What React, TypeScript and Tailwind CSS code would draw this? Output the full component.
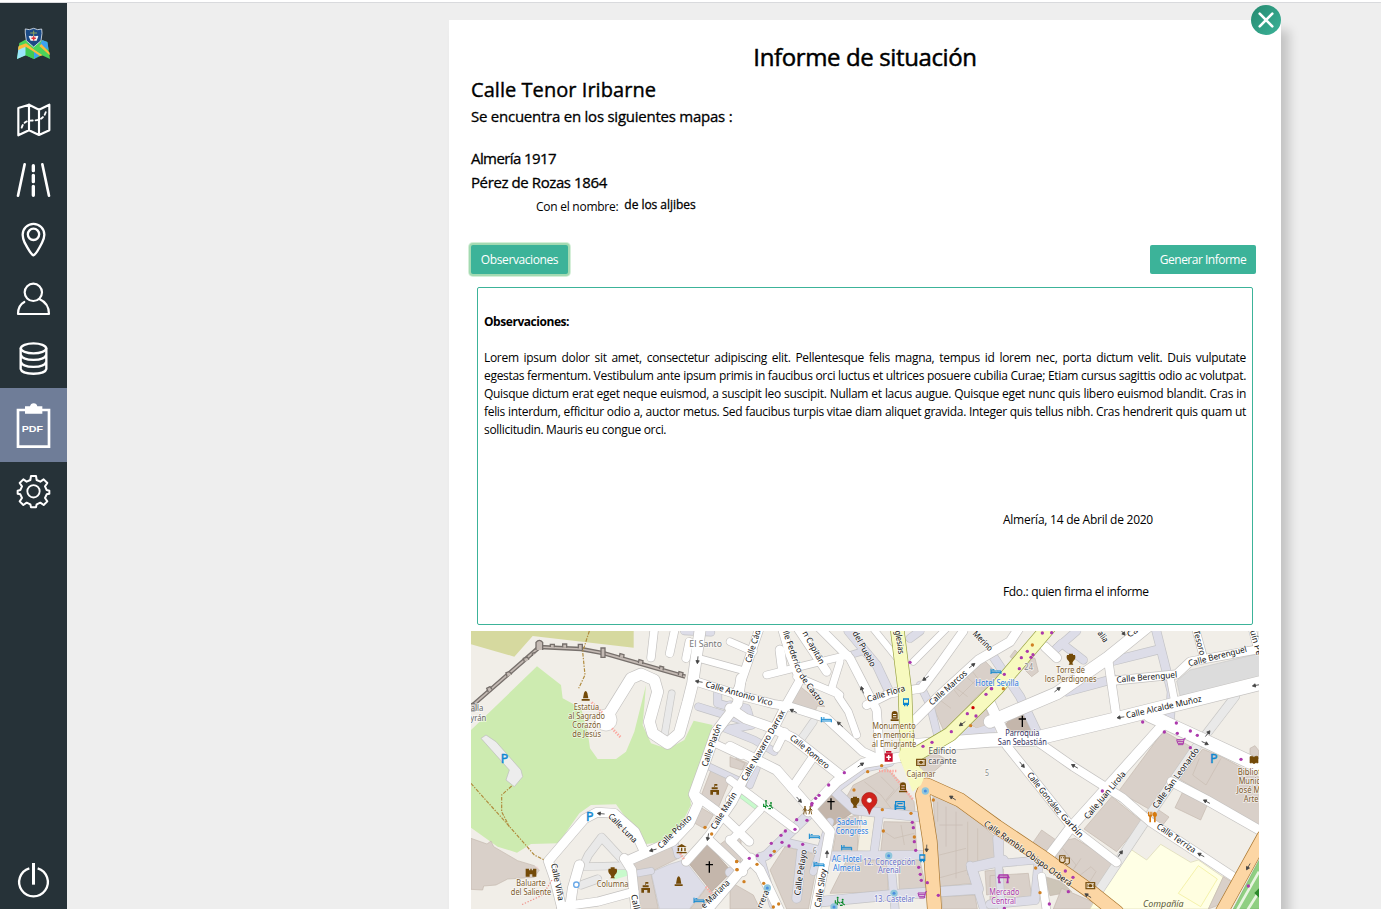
import React from 'react';

type Road = [number, number, string, string];

// The map is drawn in three side by side tiles; each entry starts with the tile's x offset.
const A = 0;
const B = 777;
const C = 1557;

const styles: Record<string, [string, string]> = {
  w: ['#ffffff', '#c4c2c0'],
  p: ['#dddde8', '#c3c3c6'],
  s: ['#e9e9e9', '#c9c8c6'],
  y: ['#f7fabf', '#98a243'],
  o: ['#fcd6a4', '#aa7730'],
};

const areas: [number, string, string, string?][] = [
  [A, '#d6d99f', '0,18 488,18 488,68 185,33 130,95 0,58'],
  [A, '#cdebb0', '198,124 270,180 275,220 330,250 350,320 357,370 380,402 435,402 465,380 490,320 525,180 515,300 540,355 590,372 640,345 668,287 725,300 690,420 655,500 660,540 640,580 600,635 580,650 520,658 495,620 435,538 360,540 325,565 262,655 180,657 138,683 80,665 0,608 0,315'],
  [A, '#ededed', '30,340 45,330 75,350 150,435 155,455 130,485 105,465 115,435', '#bbb'],
  [A, '#d9d0c9', '0,640 48,657 60,648 68,665 140,707 190,722 205,735 190,757 110,762 75,780 38,783 35,795 0,793', '#c4b8ae'],
  [A, '#f2dad9', '205,735 200,725 190,722'],
  [A, '#c8facc', '440,730 466,725 470,752 425,765'],
  [A, '#d9d0c9', '722,430 778,462 742,548 692,508', '#c4b8ae'],
  [A, '#d9d0c9', '682,543 727,570 702,612 663,590', '#c4b8ae'],
  [A, '#c4b6ab', '648,708 708,655 782,740 722,800', '#b0a196'],
  [A, '#d9d0c9', '482,706 600,665 622,700 545,738 492,735', '#c4b8ae'],
  [A, '#d9d0c9', '492,752 540,745 562,852 505,852', '#c4b8ae'],
  [A, '#dddde8', '540,742 595,718 640,704 705,787 655,852 565,852', '#c3c3c6'],
  [A, '#d9d0c9', '658,852 705,790 742,812 715,852', '#c4b8ae'],
  [A, '#d9d0c9', '745,660 810,610 810,720 790,720', '#c4b8ae'],
  [A, '#d9d0c9', '795,400 830,415 830,440 780,420', '#c4b8ae'],
  [B, '#d9d0c9', '205,180 285,245 262,243 255,260 215,250 185,240', '#c4b8ae'],
  [B, '#d9d0c9', '605,235 745,112 765,108 810,155 740,215 685,275 640,315', '#c4b8ae'],
  [B, '#d9d0c9', '740,235 770,255 785,295 740,310 700,285', '#c4b8ae'],
  [B, '#dddde8', '765,210 805,250 795,330 655,332 700,295 740,310 785,295'],
  [B, '#d9d0c9', '590,370 652,405 600,450 560,430', '#c4b8ae'],
  [B, '#d9d0c9', '370,480 470,430 510,470 552,530 555,560 455,555 385,552 350,515', '#c4b8ae'],
  [B, '#c4b6ab', '315,475 330,515 372,560 305,605 255,545', '#b0a196'],
  [B, '#d9d0c9', '462,590 555,592 560,678 452,680', '#c4b8ae'],
  [B, '#d9d0c9', '325,585 385,568 382,680 308,680', '#c4b8ae'],
  [B, '#f3efe2', '395,568 435,575 422,680 382,678', '#c4b8ae'],
  [B, '#d9d0c9', '505,706 570,706 588,790 508,800', '#c4b8ae'],
  [B, '#d9d0c9', '350,706 470,706 475,800 300,805', '#c4b8ae'],
  [B, '#d9d0c9', '608,505 700,548 810,650 810,706 722,722 725,775 628,785', '#c4b8ae'],
  [B, '#d9d0c9', '765,738 820,732 820,800 770,810', '#c4b8ae'],
  [B, '#d9d0c9', '635,815 735,810 742,852 638,852', '#c4b8ae'],
  [B, '#d9d0c9', '0,770 70,810 90,852 0,852', '#c4b8ae'],
  [B, '#d9d0c9', '120,735 165,665 265,690 255,750 235,852 170,852', '#c4b8ae'],
  [B, '#c8facc', '32,495 88,535 75,552 22,512', '#b7dcb9'],
  [B, '#d9d0c9', '0,395 45,415 35,435 0,425', '#c4b8ae'],
  [C, '#c4b6ab', '88,252 120,270 135,320 50,318 45,300', '#b0a196'],
  [C, '#d9d0c9', '75,75 90,90 135,100 145,140 125,155 95,125 60,95', '#c4b8ae'],
  [C, '#dcdcdc', '560,168 600,135 810,85 810,165 570,212', '#c8c8c8'],
  [C, '#d9d0c9', '520,318 608,368 482,555 385,500', '#c4b8ae'],
  [C, '#d9d0c9', '365,515 457,590 380,680 282,612', '#c4b8ae'],
  [C, '#d9d0c9', '638,372 700,398 810,458 810,605 568,462', '#c4b8ae'],
  [C, '#d9d0c9', '577,503 652,540 632,585 555,548', '#c4b8ae'],
  [C, '#d9d0c9', '502,552 537,576 512,608 488,590', '#c4b8ae'],
  [C, '#d9d0c9', '155,615 205,650 255,640 378,715 308,800 118,668', '#c4b8ae'],
  [C, '#d9d0c9', '0,752 115,745 125,815 0,830', '#c4b8ae'],
  [C, '#cdc5b8', '165,755 215,770 245,800 180,812', '#c4b8ae'],
  [C, '#d9d0c9', '215,790 330,840 330,852 190,852', '#c4b8ae'],
  [C, '#ffffe5', '418,670 470,705 512,658 602,712 625,705 700,757 655,852 300,852 340,780', '#d9d6b0'],
  [C, '#fffee0', '625,722 682,762 632,845 565,805', '#eeeb8e'],
  [C, '#d9d0c9', '700,755 740,780 700,835 655,852', '#c4b8ae'],
  [C, '#8fcf82', '810,700 810,852 730,852', '#77b56c'],
  [C, '#d9d0c9', '780,370 795,362 807,378 800,420 780,410', '#c4b8ae'],
];

const roads: Road[] = [
  [A, 22, 's', '602,205 578,345'],
  [A, 26, 's', '338,720 352,690 392,637 455,705'],
  [A, 24, 's', '330,725 465,722'],
  [A, 26, 's', '330,780 380,762'],
  [A, 24, 'p', '682,245 820,288'],
  [A, 26, 'p', '740,205 740,235 830,260'],
  [A, 24, 'p', '750,305 850,345 910,380'],
  [A, 22, 'p', '700,418 800,465'],
  [A, 24, 'p', '640,18 720,22'],
  [A, 22, 'p', '610,650 620,690'],
  [A, 22, 'p', '500,745 540,738'],
  [B, 28, 'p', '355,18 440,120 480,205'],
  [B, 22, 'p', '355,92 400,78'],
  [B, 26, 'p', '540,40 570,18'],
  [B, 24, 'p', '570,180 600,240 625,340'],
  [B, 26, 'p', '0,240 50,250 65,300 0,312'],
  [B, 22, 'p', '60,480 80,430'],
  [B, 30, 'p', '0,742 110,690 240,565'],
  [B, 26, 'p', '90,695 130,840'],
  [B, 26, 'p', '160,650 290,680'],
  [B, 30, 'p', '215,680 200,820'],
  [B, 30, 'p', '305,490 375,555 565,575'],
  [B, 26, 'p', '320,490 400,430 480,412'],
  [B, 26, 'p', '447,575 432,685'],
  [B, 28, 'p', '290,692 590,690'],
  [B, 24, 'p', '250,740 300,590'],
  [B, 26, 'p', '480,690 495,852'],
  [B, 32, 'p', '270,830 480,810 745,792 725,728 820,706'],
  [B, 24, 'p', '720,720 760,852'],
  [B, 24, 'p', '800,640 815,852'],
  [C, 28, 'p', '0,80 90,215 145,330'],
  [C, 26, 'p', '190,80 215,55 280,105'],
  [C, 26, 'p', '200,70 260,18'],
  [C, 28, 'p', '360,110 500,75'],
  [C, 28, 'p', '497,10 545,200 540,280'],
  [C, 28, 'p', '230,200 370,162'],
  [C, 24, 'p', '0,718 140,705'],
  [C, 26, 'p', '28,640 28,715'],
  [C, 28, 'p', '0,838 135,825 145,720'],
  [C, 28, 's', '735,215 620,365 465,590 325,800'],
  [B, 24, 's', '215,340 250,290'],
  [A, 26, 'w', '550,10 540,98'],
  [A, 26, 'w', '612,10 596,85'],
  [A, 26, 'w', '655,50 645,100'],
  [A, 36, 'w', '688,10 665,175 650,235 625,325 590,355 545,325 535,290 560,200 550,165 510,147 480,160 415,265'],
  [A, 24, 'w', '690,102 810,135'],
  [A, 28, 'w', '670,168 810,212 907,237 957,245 1067,280 1175,380 1230,405'],
  [A, 32, 'w', '810,160 800,235 735,320 705,405 668,508 682,535 655,595 605,648 480,703'],
  [A, 28, 'w', '670,508 740,560 835,650'],
  [A, 24, 'w', '725,352 810,392'],
  [A, 28, 'w', '830,440 785,530 730,610 708,640 645,710'],
  [A, 30, 'w', '708,640 815,740'],
  [A, 32, 'w', '840,700 700,865'],
  [A, 30, 'w', '520,680 492,620 430,565 378,562 340,582 232,708 250,760 275,860'],
  [A, 30, 'w', '460,700 482,735 495,860'],
  [A, 32, 'w', '295,860 305,790 325,720'],
  [A, 28, 'w', '270,845 380,830 490,800'],
  [B, 28, 'w', '90,5 30,180 15,210'],
  [B, 24, 'w', '0,50 70,80'],
  [B, 28, 'w', '155,5 180,90 210,165 165,245 140,295 55,440 0,525'],
  [B, 28, 'w', '200,5 290,140'],
  [B, 24, 'w', '110,150 250,115 355,90'],
  [B, 30, 'w', '150,75 157,130'],
  [B, 24, 'w', '200,155 330,210 305,190 330,110'],
  [B, 24, 'w', '325,215 355,260 380,330'],
  [B, 28, 'w', '265,5 360,100 440,255 450,395'],
  [B, 28, 'w', '410,240 480,205 575,190 620,130 700,18'],
  [B, 22, 'w', '425,5 510,110'],
  [B, 22, 'w', '550,110 650,10'],
  [B, 30, 'w', '550,290 625,215 745,105 840,50 870,5'],
  [B, 32, 'w', '0,250 45,280 130,310 190,340 330,450'],
  [B, 24, 'w', '165,320 140,370'],
  [B, 28, 'w', '250,395 185,490'],
  [B, 32, 'w', '0,365 140,435 245,555 300,620 280,730 255,860'],
  [B, 32, 'w', '235,560 320,470 400,415 520,395'],
  [B, 26, 'w', '0,465 195,612'],
  [B, 26, 'w', '90,555 10,640'],
  [B, 30, 'w', '0,645 90,735 150,860'],
  [C, 30, 'w', '165,65 200,98'],
  [C, 44, 'w', '-220,362 0,345 130,342 380,282 820,172'],
  [C, 40, 'w', '0,290 200,205 355,98 470,5'],
  [C, 34, 'w', '0,235 50,345'],
  [C, 28, 'w', '353,95 380,280'],
  [C, 28, 'w', '372,167 560,148 600,110 820,70'],
  [C, 24, 'w', '540,155 555,235'],
  [C, 24, 'w', '615,5 640,95'],
  [C, 24, 'w', '785,5 805,80'],
  [C, 42, 'w', '480,272 650,350 820,430'],
  [C, 32, 'w', '520,298 240,610 165,710'],
  [C, 28, 'w', '50,362 250,612 380,712'],
  [C, 28, 'w', '150,355 250,425 400,520 480,590 745,765'],
  [C, 30, 'w', '545,470 650,525 820,622'],
  [C, 26, 'w', '155,755 170,860'],
  [B, 42, 'y', '500,0 525,200 532,400 560,455'],
  [B, 44, 'y', '538,400 660,328 800,190 970,-10'],
  [B, 44, 'o', '1160,862 1080,798 930,692 800,605 690,525 590,480 578,510 600,650 614,860'],
  [C, 40, 'o', '820,635 690,870'],
];

const dash: [number, string, string][] = [
  [A, '#b08a3c', '355,18 335,80 342,150 323,190'],
  [A, '#b08a3c', '0,475 120,610 190,690 220,705'],
  [A, '#b08a3c', '122,483 92,510 92,560 115,605'],
  [A, '#f08c84', '243,765 215,810 150,840'],
];

const steps: [number, string][] = [
  [A, '362,232 395,265'],
  [A, '423,310 450,338'],
  [A, '628,685 640,704'],
  [A, '705,785 722,806'],
  [B, '480,438 550,525'],
  [B, '447,438 500,438'],
];

const dots: [number, string, string][] = [
  [B, '#ac39ac', '540,112 606,352 579,364 664,320 712,266 738,273 768,208 784,191 343,443 296,480 267,511 257,520 246,535 200,584 231,586 195,613 166,618 153,631 156,652 177,663 124,655 82,692 58,700 122,691 218,658 547,592 550,608 553,650 557,676 566,727 571,748 574,766 592,773 625,811 245,540'],
  [B, '#d08023', '722,302 455,422 413,440 372,495 457,554 543,565 610,525 553,636 460,618 81,718 20,709 21,734 42,770 101,775 133,679 146,837 130,846'],
  [A, '#d08023', '702,607 722,627 797,710 798,734'],
  [C, '#ac39ac', '157,24 185,23 112,79 94,98 129,89 123,97 88,131 43,148 5,191 458,291 559,294 523,321 562,325 601,318 622,331 601,368 753,403 337,498 226,738 249,757 235,800 178,837 775,783 43,850'],
  [C, '#d08023', '127,60 40,191 137,729 150,803'],
];

// text, tile, x1, y1, x2, y2 of its baseline
const streetNames: [string, number, number, number, number, number][] = [
  ['Calle Antonio Vico', A, 702, 185, 902, 243],
  ['Calle Platón', A, 708, 427, 752, 300],
  ['Calle Luna', A, 410, 575, 488, 655],
  ['Calle Pósito', A, 570, 672, 664, 580],
  ['Calle Marín', A, 733, 615, 798, 508],
  ['Calle Viña', A, 240, 717, 262, 828],
  ['Calle', A, 480, 810, 492, 870],
  ['e Mariana', A, 700, 852, 778, 775],
  ['Calle Cád', B, 62, 115, 92, 18],
  ['lle Federico', B, 158, 20, 202, 145],
  ['de Castro', B, 206, 153, 272, 243],
  ['n Capitán', B, 217, 24, 270, 120],
  ['del Pueblo', B, 367, 24, 423, 127],
  ['glesias', B, 495, 18, 506, 88],
  ['Merino', B, 727, 28, 778, 80],
  ['Calle Flora', B, 414, 231, 527, 197],
  ['Calle Marcos', B, 606, 242, 713, 147],
  ['Calle Navarro Darrax', B, 48, 470, 166, 262],
  ['Calle Romero', B, 178, 341, 290, 433],
  ['Calle Siloy', B, 271, 848, 290, 733],
  ['Calle Pelayo', B, 210, 812, 230, 675],
  ['rrera', B, 95, 852, 118, 800],
  ['alia', C, 322, 25, 342, 54],
  ['Ca', C, 418, 38, 446, 20],
  ['Tesoro', C, 610, 18, 630, 92],
  ['uín Pe', C, 780, 18, 800, 92],
  ['Calle Berenguel', C, 380, 173, 562, 157],
  ['Calle Berenguel', C, 597, 124, 772, 80],
  ['Calle Alcalde Muñoz', C, 410, 280, 636, 229],
  ['Calle González', C, 110, 450, 204, 570],
  ['Garbín', C, 210, 576, 270, 640],
  ['Calle Juan Lirola', C, 294, 584, 408, 448],
  ['Calle San Leonardo', C, 500, 552, 628, 376],
  ['Calle Terriza', C, 498, 608, 610, 685],
  ['Calle Rambla Obispo Orberá', C, -20, 600, 238, 785],
];

// text, tile, centre x, baseline y, width, colour
const places: [string, number, number, number, number, string][] = [
  ['El Santo', A, 704, 66, 98, '#777777'],
  ['alla', A, 18, 257, 38, '#666666'],
  ['yrán', A, 22, 287, 48, '#666666'],
  ['Estatua', A, 346, 255, 76, '#7b5a2a'],
  ['al Sagrado', A, 347, 281, 110, '#7b5a2a'],
  ['Corazón', A, 347, 308, 86, '#7b5a2a'],
  ['de Jesús', A, 347, 335, 86, '#7b5a2a'],
  ['Baluarte', A, 180, 784, 88, '#7b5a2a'],
  ['del Saliente', A, 180, 811, 121, '#7b5a2a'],
  ['Columna', A, 425, 787, 95, '#7b5a2a'],
  ['Monumento', B, 492, 313, 130, '#7b5a2a'],
  ['en memoria', B, 492, 339, 127, '#7b5a2a'],
  ['al Emigrante', B, 492, 366, 133, '#7b5a2a'],
  ['Edificio', B, 637, 388, 83, '#555555'],
  ['carante', B, 637, 417, 85, '#555555'],
  ['Cajamar', B, 573, 456, 87, '#7b5a2a'],
  ['Sadelma', B, 366, 601, 90, '#2a7be0'],
  ['Congress', B, 366, 628, 98, '#2a7be0'],
  ['AC Hotel', B, 350, 710, 90, '#2a7be0'],
  ['Almería', B, 350, 737, 82, '#2a7be0'],
  ['12. Concepción', B, 478, 719, 158, '#6b74c9'],
  ['Arenal', B, 478, 745, 68, '#6b74c9'],
  ['13. Castelar', B, 493, 832, 122, '#6b74c9'],
  ['Hotel Sevilla', B, 801, 182, 130, '#2a7be0'],
  ['5', B, 771, 453, 12, '#888888'],
  ['6', B, 254, 687, 12, '#888888'],
  ['24', C, 116, 136, 26, '#888888'],
  ['Torre de', C, 242, 145, 86, '#7b5a2a'],
  ['los Perdigones', C, 242, 171, 155, '#7b5a2a'],
  ['Parroquia', C, 97, 334, 103, '#33305e'],
  ['San Sebastián', C, 97, 361, 147, '#33305e'],
  ['Mercado', C, 43, 811, 90, '#ac39ac'],
  ['Central', C, 41, 837, 74, '#ac39ac'],
  ['Bibliot', C, 778, 451, 70, '#7b5a2a'],
  ['Munic', C, 778, 477, 64, '#7b5a2a'],
  ['José M', C, 776, 504, 72, '#7b5a2a'],
  ['Arte', C, 783, 531, 44, '#7b5a2a'],
];

const arrows: [number, number, number, number][] = [
  [A, 680, 105, 95], [A, 684, 170, 190], [A, 390, 566, 185], [A, 546, 675, 165], [A, 711, 636, 100],
  [B, 397, 195, 250], [B, 190, 258, 205], [B, 330, 298, 222], [B, 392, 420, -35], [B, 207, 524, 48],
  [B, 726, 122, -38], [B, 587, 160, 145], [B, 697, 296, 145], [B, 668, 519, 212], [B, 590, 670, 92], [B, 291, 688, -88],
  [C, 202, 194, -38], [C, 392, 277, 172], [C, 798, 181, 170], [C, 398, 22, 50], [C, 96, 419, 50], [C, 254, 424, 210],
  [C, 653, 326, -52], [C, 645, 354, 25], [C, 650, 530, 208], [C, 391, 686, -55], [C, 633, 690, 208], [C, 294, 812, 212], [C, 775, 725, 120],
];

const beds: [number, number, number][] = [
  [A, 684, 826], [B, 289, 284], [B, 253, 634], [B, 350, 668], [B, 267, 718], [B, 510, 546], [B, 798, 139],
];

const Bed = () => (
  <path d="M-15-8V8M-15 4H15V8M15 4V-1H-15M-11-5h6" fill="none" stroke="#0d86d0" strokeWidth="3" />
);
const Monument = () => <path d="M-12 15v-5h24v5zM-8 8L-5-8q5-12 10 0L8 8z" fill="#734a08" />;
const Tomb = () => (
  <path fillRule="evenodd" d="M-12 15v-5h24v5zM-9 8V-6q0-9 9-9t9 9V8zM-5-6h10v3H-5zM-5 1h10v3H-5z" fill="#734a08" />
);
const Vase = () => (
  <path d="M-6-17H6V-13H12Q16-2 7 5L4 11 7 16H-7L-4 11-7 5Q-16-2-12-13H-6z" fill="#734a08" />
);
const Cross = () => <path d="M0-17V17M-11-7H11" stroke="#000" strokeWidth="4" />;
const Hall = () => (
  <path fillRule="evenodd" d="M-13 15V1h26v14h-8V7h-10v8zM-9-1v-6h18v6zM-1-8v-9h9v5h-7v4z" fill="#734a08" />
);
const Museum = () => (
  <path d="M-15-5L0-14 15-5zM-12-3h4V8h-4zM-2-3h4V8h-4zM8-3h4V8H8zM-15 10h30v4h-30z" fill="#734a08" />
);
const Cart = () => (
  <path d="M13-12H9L5 7H-10M9-8h-23l3 11H6M-12-3H8" fill="none" stroke="#ac39ac" strokeWidth="3" />
);

const icons: [number, number, number, () => React.ReactElement][] = [
  [A, 344, 212, Monument], [A, 623, 768, Monument], [A, 731, 494, Hall], [A, 524, 788, Hall], [A, 632, 671, Museum],
  [A, 425, 744, Vase], [A, 715, 726, Cross], [B, 494, 273, Tomb], [B, 519, 487, Tomb], [B, 375, 532, Vase],
  [B, 303, 537, Cross], [C, 243, 103, Vase], [C, 97, 289, Cross], [B, 578, 812, Cart], [C, 574, 352, Cart],
];

function StreetName({ item }: { item: [string, number, number, number, number, number] }) {
  const [text, o, x1, y1, x2, y2] = item;
  const length = Math.hypot(x2 - x1, y2 - y1);
  const angle = (Math.atan2(y2 - y1, x2 - x1) * 180) / Math.PI;
  return (
    <text
      transform={`translate(${o + x1} ${y1}) rotate(${angle})`}
      textLength={length}
      lengthAdjust="spacingAndGlyphs"
      fontSize="25.5"
      fill="#111"
      stroke="#ffffff"
      strokeOpacity="0.6"
      strokeWidth="5"
      paintOrder="stroke"
    >
      {text}
    </text>
  );
}

function StreetMap() {
  return (
    <svg className="block h-[278px] w-[788px] font-['Noto_Sans',sans-serif]" viewBox="0 18 2364 834">
      <rect y="18" width="2364" height="834" fill="#f1eee8" />
      {areas.map(([o, fill, points, stroke], i) => (
        <polygon key={i} points={points} fill={fill} stroke={stroke ?? 'none'} strokeWidth="2" transform={`translate(${o} 0)`} />
      ))}
      <g fill="none" stroke="#c8bcb2" strokeWidth="2">
        <path d="M1400 530v60M1425 545v120M1455 560v200M1490 590v160M1520 610v130M1405 600h70M1405 690l80-20M1400 760l90-25" />
        <path d="M1180 470l50 40 30 40M1230 455l40 40-25 30M1290 480l-45 50M1240 620l30 20 60-15M1290 600l10 60" />
        <path d="M1430 170l60-50 30 40-55 55zM1450 185l40 30M1480 150l40 35M1400 220l40 30" />
        <path d="M1775 670l40 50-30 50M1830 700l-20 30M1860 725l15 15-25 40-35-20zM2185 400l-20 50 40 30 45-80" />
      </g>
      {['p', 's', 'w', 'y', 'o'].map((kind) => (
        <React.Fragment key={kind}>
          {roads.filter((r) => r[2] === kind).map(([o, w, k, points], i) => (
            <polyline key={`c${i}`} points={points} transform={`translate(${o} 0)`} fill="none" stroke={styles[k][1]} strokeWidth={w + 1} strokeLinecap="round" strokeLinejoin="round" />
          ))}
          {kind === 'w' && <circle cx="405" cy="285" r="33" fill="#fff" stroke="#c4c2c0" strokeWidth="2" />}
          {roads.filter((r) => r[2] === kind).map(([o, w, k, points], i) => (
            <polyline key={`f${i}`} points={points} transform={`translate(${o} 0)`} fill="none" stroke={styles[k][0]} strokeWidth={w - 3} strokeLinecap="round" strokeLinejoin="round" />
          ))}
        </React.Fragment>
      ))}
      <path d="M1282 390L1296 360 1312 395 1365 445 1350 480 1325 500z" fill="#f7fabf" />
      <path d="M2364 740L2290 870M2364 800L2320 870" stroke="#e8f5e0" strokeWidth="8" />
      <path d="M0 245L205 66 330 72 400 85 643 155" fill="none" stroke="#77706c" strokeWidth="13" />
      <path d="M0 245L205 66 330 72 400 85 643 155" fill="none" stroke="#c4bab4" strokeWidth="5" />
      <path d="M52 202l-5-12 10-5 6 8M108 155l-3-12 10-3 8 8M160 110l-3-10 12-4 5 8M184 93l0-8 10-3M195 75V52q10-12 20 0V75M238 66v-8h12v9M275 67V57h12v11M322 70V58h12v18M390 75v-6h12v28h-12zM445 96l2-10 12 3-1 10M502 114l2-10 12 3-1 10M565 132l2-9 11 3-2 10M622 150l2-10 12 3-2 12" fill="#c4bab4" stroke="#77706c" strokeWidth="4" />
      <circle cx="6" cy="247" r="12" fill="#c4bab4" stroke="#77706c" strokeWidth="4" />
      {dash.map(([o, c, points], i) => (
        <polyline key={i} points={points} transform={`translate(${o} 0)`} fill="none" stroke={c} strokeWidth="3.5" strokeDasharray={c === '#f08c84' ? '4 5' : '11 4 4 4'} />
      ))}
      {steps.map(([o, points], i) => (
        <polyline key={i} points={points} transform={`translate(${o} 0)`} fill="none" stroke="#fba79f" strokeWidth="8" strokeDasharray="4 4" />
      ))}
      {dots.map(([o, c, list]) =>
        list.split(' ').map((p) => {
          const [x, y] = p.split(',').map(Number);
          return <circle key={`${o}${c}${p}`} cx={o + x} cy={y} r="5" fill={c} />;
        }),
      )}
      <circle cx="1506" cy="248" r="5" fill="#c00" />
      {[[1363, 498], [1253, 692], [1269, 805], [889, 789], [1089, 846]].map(([x, y]) => (
        <g key={x}>
          <circle cx={x} cy={y} r="11" fill="#8fc6dc" />
          <circle cx={x} cy={y} r="4.5" fill="#4b8fe0" />
        </g>
      ))}
      <circle cx="316" cy="779" r="8" fill="#fff" stroke="#6aa9e8" strokeWidth="4" />
      {arrows.map(([o, x, y, a]) => (
        <path key={`${o}${x}`} d="M-11 0H5M2-5L11 0 2 5z" fill="#444" stroke="#444" strokeWidth="2.4" transform={`translate(${o + x} ${y}) rotate(${a})`} />
      ))}
      {streetNames.map((item, i) => (
        <StreetName key={i} item={item} />
      ))}
      {places.map(([text, o, x, y, w, c]) => (
        <text key={`${text}${x}`} x={o + x - w / 2} y={y} textLength={w} lengthAdjust="spacingAndGlyphs" fontSize="24" fill={c} stroke="#ffffff" strokeOpacity="0.6" strokeWidth="5" paintOrder="stroke">
          {text}
        </text>
      ))}
      <text x="2016" y="847" fontSize="24" fontStyle="italic" textLength="122" lengthAdjust="spacingAndGlyphs" fill="#5c5a3e">Compañía</text>
      {[[89, 415], [345, 587], [2217, 413]].map(([x, y]) => (
        <text key={x} x={x} y={y} fontSize="37" fill="#0d86d0" stroke="#0d86d0" strokeWidth="1.500">P</text>
      ))}
      {beds.map(([o, x, y]) => (
        <g key={`${o}${x}`} transform={`translate(${o + x} ${y})`}><Bed /></g>
      ))}
      <path d="M1274 555V530M1300 555V530M1272 530h30M1279 536h16" stroke="#0d86d0" strokeWidth="3.500" fill="none" />
      {icons.map(([o, x, y, Icon]) => (
        <g key={`${o}${x}`} transform={`translate(${o + x} ${y})`}><Icon /></g>
      ))}
      <path d="M164 755v-24h10v5h4v-5h4v5h4v-5h10v24h-12v-7h-8v7z" fill="#734a08" />
      {[[1305, 231], [1354, 699]].map(([x, y]) => (
        <path key={x} transform={`translate(${x} ${y})`} fillRule="evenodd" d="M-9-11H9V9H6v4H2V9H-2v4H-6V9H-9zM-6-7H6V2H-6z" fill="#0d86d0" />
      ))}
      <g transform="translate(1253 396)">
        <path d="M-8-18H8V-13H-8zM-12-11H12V14H-12z" fill="#c8102e" />
        <path d="M0-6V9M-7 1H7" stroke="#fff" strokeWidth="4.5" />
      </g>
      {[[1350, 412], [1858, 782]].map(([x, y]) => (
        <g key={x} transform={`translate(${x} ${y})`}>
          <rect x="-13" y="-9" width="26" height="18" fill="#f5e9d6" stroke="#734a08" strokeWidth="3.5" />
          <ellipse rx="6" ry="5" fill="#734a08" />
          <path d="M-9-5v10M9-5v10" stroke="#734a08" strokeWidth="2" />
        </g>
      ))}
      <g fill="none" stroke="#734a08" strokeWidth="2.600" transform="translate(1010 556)">
        <path d="M-8-7L-12 12M-8-7L-4 12M-14 0L-8-6-1 2M8-7L4 12M8-7L12 12M1 2L8-6 14 0" />
        <circle cx="-8" cy="-10" r="2" /><circle cx="8" cy="-10" r="2" />
      </g>
      {[[892, 538], [1107, 828]].map(([x, y]) => (
        <g key={x} transform={`translate(${x} ${y})`}>
          <circle cx="-7" cy="-10" r="3" fill="#0a8a2a" />
          <circle cx="8" cy="-4" r="3" fill="#0a8a2a" />
          <path d="M-7-7v9l7 5M-14-2v8h6v6M8 0v7l6 5M2 4h8M0 13h8" fill="none" stroke="#0a8a2a" strokeWidth="3.400" />
        </g>
      ))}
      <path d="M1584 775v-18h26v18M1582 772h7M1606 772h7M1582 757l3-7h25l3 7z" fill="none" stroke="#ac39ac" strokeWidth="5" />
      <path d="M1766 692h16v17q-8 8-16 0zM1783 699h12v15q-6 7-12 1M1770 698h3M1776 698h3" fill="#ead9c4" stroke="#734a08" strokeWidth="3.2" />
      <g fill="#d67a10" transform="translate(2044 576)">
        <path d="M-13-16h3v9h2v-9h3v9h2v-9h3V-4l-4 4v16h-5V0l-4-4zM5 16V0Q0-4 1-10 4-17 8-16 14-14 14-6 13-1 10 0v16z" />
      </g>
      <path d="M2337 395q7-4 12 2 6-6 12-2v19q-7-3-12 2-5-5-12-2z" fill="#734a08" stroke="#734a08" strokeWidth="2" />
      <path d="M2364 790l-14 14 14 14z" fill="#2c8a2c" />
      <path d="M1195 568Q1191 551 1179 542A23 23 0 1 1 1211 542Q1199 551 1195 568z" fill="#d0231c" stroke="#a51a15" strokeWidth="2" />
      <circle cx="1195" cy="526" r="8" fill="#fff" stroke="#a51a15" strokeWidth="1.5" />
    </svg>
  );
}

function NavIcon({ top, height, className, children }: { top: number; height: number; className: string; children: React.ReactNode }) {
  return (
    <button className={`block w-[67px] shrink-0 ${className}`}>
      <svg className="block h-full w-full" viewBox={`0 ${top} 201 ${height}`} fill="none" stroke="#fff" strokeWidth="7" strokeLinejoin="round" strokeLinecap="round">
        {children}
      </svg>
    </button>
  );
}

function Sidebar() {
  return (
    <nav className="flex h-full w-[67px] shrink-0 flex-col bg-[#263238]">
      <NavIcon top={9} height={261} className="h-[87px]">
        <g stroke="none">
          <path d="M58 129L76 119 100 139 126 120 142 126 150 177 126 166 102 177 77 166 51 177z" fill="#4bd45a" />
          <path d="M56 140L77 135 77 166 51 177z" fill="#9be6fb" />
          <path d="M77 135L102 158 102 177 77 166z" fill="#3fcb55" />
          <path d="M126 120L142 126 146 150 120 135z" fill="#3fa2ee" />
          <path d="M102 150L124 163 102 177z" fill="#3fa2ee" />
          <path d="M56 138L78 130 104 150 128 166 120 168 98 153 77 140 54 150zM118 138L124 132 149 158 149 166z" fill="#fdbb3c" />
          <path d="M77 87L88 89 101 85 113 89 125 87 126 100 123 122 101 141 79 122 76 100z" fill="#1b4a86" stroke="#dfe6ef" strokeWidth="2.500" />
          <path d="M92 99h18M101 93v14" stroke="#8ea35a" strokeWidth="3" />
          <path d="M86 109q5-3 9 0 6-4 12 0 5-3 8 0l-5 13H92z" fill="#f3f4f6" />
          <path d="M101 110v10M96 115h10" stroke="#e0343a" strokeWidth="4.500" />
        </g>
      </NavIcon>
      <NavIcon top={270} height={180} className="h-[60px]">
        <path d="M55 324L87 314 117 329 148 314V391L117 405 87 391 55 406zM87 314V391M117 329V405" strokeWidth="6.500" />
        <path d="M65 383Q71 363 91 362T119 359Q134 350 138 334" strokeDasharray="8 9" strokeWidth="5.500" />
      </NavIcon>
      <NavIcon top={450} height={180} className="h-[60px]">
        <path d="M74 493L54 587M127 493L147 587" strokeWidth="8" />
        <path d="M100 497V512M100 526V545M100 559V586" strokeWidth="10" />
      </NavIcon>
      <NavIcon top={630} height={180} className="h-[60px]">
        <path d="M100 766Q93 764 74 728Q68 714 68 704A32.500 32.500 0 0 1 133 704Q133 714 126 728Q108 764 100 766z" />
        <circle cx="100.500" cy="703" r="17" strokeWidth="7" />
      </NavIcon>
      <NavIcon top={30} height={180} className="h-[60px]">
        <circle cx="100" cy="97" r="26" strokeWidth="6.500" />
        <path d="M73 126Q54 136 54 162H147Q147 130 118 117" strokeWidth="6.500" />
      </NavIcon>
      <NavIcon top={210} height={174} className="h-[58px]">
        <ellipse cx="100.500" cy="265" rx="38" ry="15" />
        <path d="M62 265V327C66 346 135 346 139 327V265M62 284C68 305 133 305 139 284M62 305C68 326 133 326 139 305" />
      </NavIcon>
      <NavIcon top={384} height={222} className="h-[74px] bg-[#6f7d98]">
        <path d="M54 450H147V560H54z" strokeWidth="8" strokeLinejoin="miter" />
        <path d="M75 439H90Q92 430 101 430T112 439H127V461H75z" fill="#fff" stroke="none" />
        <text x="65" y="516" fontSize="28" fontWeight="700" textLength="64" lengthAdjust="spacingAndGlyphs" fill="#fff" stroke="none" className="font-['Liberation_Sans',sans-serif]">PDF</text>
      </NavIcon>
      <NavIcon top={606} height={180} className="h-[60px]">
        <circle cx="100.500" cy="694" r="18.500" strokeWidth="5.500" />
        <path d="M93 648h15l2 12 11 5 10-7 11 11-7 10 5 11 8 2v9l-8 2-5 11 7 10-11 11-10-7-11 5-2 9H93l-2-9-11-5-10 7-11-11 7-10-5-11-8-2v-9l8-2 5-11-7-10 11-11 10 7 11-5z" strokeWidth="6" />
      </NavIcon>
      <NavIcon top={30} height={177} className="mt-auto h-[59px]">
        <path d="M88 85A43 43 0 1 0 113 85" strokeWidth="7" strokeLinecap="butt" />
        <path d="M100.500 69V134" strokeWidth="9" strokeLinecap="butt" />
      </NavIcon>
    </nav>
  );
}

const paragraph = [
  'Lorem ipsum dolor sit amet, consectetur adipiscing elit. Pellentesque felis magna, tempus id lorem nec, porta dictum velit. Duis vulputate',
  'egestas fermentum. Vestibulum ante ipsum primis in faucibus orci luctus et ultrices posuere cubilia Curae; Etiam cursus sagittis odio ac volutpat.',
  'Quisque dictum erat eget neque euismod, a suscipit leo suscipit. Nullam et lacus augue. Quisque eget nunc quis libero euismod blandit. Cras in',
  'felis interdum, efficitur odio a, auctor metus. Sed faucibus turpis vitae diam aliquet gravida. Integer quis tellus nibh. Cras hendrerit quis quam ut',
];

export default function App() {
  return (
    <div className="flex h-[909px] w-[1381px] flex-col overflow-hidden bg-[#eeeeee] font-['Open_Sans','Noto_Sans',sans-serif] text-black">
      <div className="h-[3px] shrink-0 border-b border-[#d9dadd] bg-white" />
      <div className="flex min-h-0 flex-1">
        <Sidebar />
        <main className="flex flex-1 pl-[382px] pt-[17px]">
          <section className="relative flex h-[1000px] w-[832px] shrink-0 flex-col bg-white px-[22px] shadow-[8px_10px_10px_rgba(0,0,0,0.18)]">
            <button aria-label="Cerrar" className="absolute -top-[15px] right-0 flex h-[30px] w-[30px] items-center justify-center rounded-full bg-linear-to-br from-[#25896f] to-[#3cb399]">
              <svg className="h-[16px] w-[16px]" viewBox="0 0 16 16" stroke="#fff" strokeWidth="2.600" strokeLinecap="round"><path d="M1.700 1.700L14.300 14.300M14.300 1.700L1.700 14.300" /></svg>
            </button>
            <h1 className="mt-[19px] text-center text-[24px] leading-9 tracking-[-0.38px] [-webkit-text-stroke:0.5px_#000]">Informe de situación</h1>
            <h2 className="text-[20px] leading-[30px] tracking-[0.05px] [-webkit-text-stroke:0.4px_#000]">Calle Tenor Iribarne</h2>
            <h3 className="text-[15px] leading-[22px] tracking-[-0.24px] [-webkit-text-stroke:0.3px_#000]">Se encuentra en los siguientes mapas :</h3>
            <h3 className="mt-[19px] text-[15px] leading-6 tracking-[-0.58px] [-webkit-text-stroke:0.3px_#000]">Almería 1917</h3>
            <h3 className="text-[15px] leading-6 tracking-[-0.4px] [-webkit-text-stroke:0.3px_#000]">Pérez de Rozas 1864</h3>
            <div className="mt-px flex h-6 gap-[6px] pl-[65px] text-[12px]">
              <span className="pt-[3px] leading-[18px] tracking-[-0.26px]">Con el nombre:</span>
              <span className="pt-px leading-[18px] tracking-[-0.04px] [-webkit-text-stroke:0.3px_#000]">de los aljibes</span>
            </div>
            <div className="mt-[26px] flex h-[29px] justify-between pr-[3px] text-[12px] text-white">
              <button className="w-[97px] rounded-[2px] bg-[#3cb399] tracking-[-0.4px] shadow-[0_0_0_2px_#a3dab2,0_0_0_3px_#d5efd9]">Observaciones</button>
              <button className="w-[106px] rounded-[2px] bg-[#3cb399] tracking-[-0.5px]">Generar Informe</button>
            </div>
            <article className="ml-[6px] mt-[13px] h-[338px] w-[776px] shrink-0 rounded-[2px] border border-[#3cb399] px-[6px] pt-[25px] text-[12px] leading-[18px] tracking-[-0.31px]">
              <p className="font-bold tracking-[-0.45px]">Observaciones:</p>
              <div className="mt-[18px]">
                {paragraph.map((line) => (
                  <p key={line} className="whitespace-nowrap [text-align-last:justify]">{line}</p>
                ))}
                <p>sollicitudin. Mauris eu congue orci.</p>
              </div>
              <p className="mt-[72px] pl-[519px] tracking-[-0.25px]">Almería, 14 de Abril de 2020</p>
              <p className="mt-[54px] pl-[519px] tracking-[-0.34px]">Fdo.: quien firma el informe</p>
            </article>
            <div className="mt-[6px]"><StreetMap /></div>
          </section>
        </main>
      </div>
    </div>
  );
}
